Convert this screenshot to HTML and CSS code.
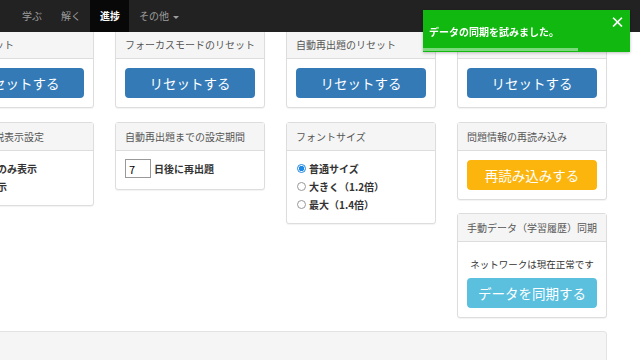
FILE: index.html
```html
<!DOCTYPE html>
<html lang="ja">
<head>
    <meta charset="UTF-8">
    <meta name="viewport" content="width=device-width, initial-scale=1.0">
    <title>進捗 - 設定</title>
    <link rel="stylesheet" href="styles.css">
</head>
<body>
    <!-- Navbar -->
    <nav class="navbar">
        <a class="nav-item" href="#">学ぶ</a>
        <a class="nav-item" href="#">解く</a>
        <a class="nav-item active" href="#">進捗</a>
        <a class="nav-item" href="#">その他 <span class="caret"></span></a>
    </nav>

    <!-- Toast -->
    <div class="toast">
        <span class="toast-close">&times;</span>
        <p class="toast-text">データの同期を試みました。</p>
        <div class="toast-progress" style="width: 75%;"></div>
    </div>

    <main class="settings">
        <!-- Row 1: resets -->
        <div class="settings-row">
            <div class="panel">
                <div class="panel-heading">履歴リセット</div>
                <div class="panel-body">
                    <button class="btn btn-primary">リセットする</button>
                </div>
            </div>
            <div class="panel">
                <div class="panel-heading">フォーカスモードのリセット</div>
                <div class="panel-body">
                    <button class="btn btn-primary">リセットする</button>
                </div>
            </div>
            <div class="panel">
                <div class="panel-heading">自動再出題のリセット</div>
                <div class="panel-body">
                    <button class="btn btn-primary">リセットする</button>
                </div>
            </div>
            <div class="panel">
                <div class="panel-heading">苦手問題のリセット</div>
                <div class="panel-body">
                    <button class="btn btn-primary">リセットする</button>
                </div>
            </div>
        </div>

        <!-- Row 2: options -->
        <div class="settings-row row-two">
            <div class="panel">
                <div class="panel-heading">問題の解説表示設定</div>
                <div class="panel-body list-body">
                    <label class="option"><input type="radio" name="kaisetsu" checked> 解答後のみ表示</label>
                    <label class="option"><input type="radio" name="kaisetsu"> 常に表示</label>
                </div>
            </div>
            <div class="panel">
                <div class="panel-heading">自動再出題までの設定期間</div>
                <div class="panel-body days-body">
                    <input class="days-input" type="text" value="7">
                    <span class="days-label">日後に再出題</span>
                </div>
            </div>
            <div class="panel">
                <div class="panel-heading">フォントサイズ</div>
                <div class="panel-body list-body">
                    <label class="option"><input type="radio" name="fontsize" checked> 普通サイズ</label>
                    <label class="option"><input type="radio" name="fontsize"> 大きく（1.2倍）</label>
                    <label class="option"><input type="radio" name="fontsize"> 最大（1.4倍）</label>
                </div>
            </div>
            <div class="stack">
                <div class="panel">
                    <div class="panel-heading">問題情報の再読み込み</div>
                    <div class="panel-body">
                        <button class="btn btn-warning">再読み込みする</button>
                    </div>
                </div>
                <div class="panel">
                    <div class="panel-heading">手動データ（学習履歴）同期</div>
                    <div class="panel-body sync-body">
                        <p class="network-status">ネットワークは現在正常です</p>
                        <button class="btn btn-info">データを同期する</button>
                    </div>
                </div>
            </div>
        </div>

        <div class="well"></div>
    </main>
</body>
</html>
```

FILE: styles.css
```css
/* Global */
body {
    margin: 0;
    padding: 0;
    background-color: #fff;
    font-family: "Noto Sans CJK JP", "Noto Sans", sans-serif;
    font-size: 10px;
    color: #333;
    overflow: hidden;
}

/* Navbar */
.navbar {
    position: fixed;
    top: 0;
    left: 0;
    right: 0;
    height: 32px;
    background-color: #222;
    display: flex;
    padding-left: 12px;
    z-index: 10;
}

.nav-item {
    display: block;
    padding: 0 9px 0 10px;
    line-height: 32px;
    font-size: 10px;
    color: #9d9d9d;
    text-decoration: none;
}

.nav-item.active {
    background-color: #080808;
    color: #fff;
    font-weight: bold;
}

.caret {
    display: inline-block;
    width: 0;
    height: 0;
    margin-left: 2px;
    vertical-align: middle;
    border-top: 3px solid #9d9d9d;
    border-left: 3px solid transparent;
    border-right: 3px solid transparent;
}

/* Toast */
.toast {
    position: fixed;
    top: 10px;
    left: 423px;
    width: 207px;
    height: 42px;
    background-color: #10b80f;
    box-shadow: 0 1px 3px rgba(0, 0, 0, 0.25);
    z-index: 20;
}

.toast-text {
    margin: 0;
    padding: 15px 0 0 6px;
    font-size: 10px;
    font-weight: bold;
    color: #fff;
    line-height: 14px;
}

.toast-close {
    position: absolute;
    top: 4px;
    right: 5px;
    font-size: 15px;
    font-weight: bold;
    color: #fff;
    line-height: 16px;
}

.toast-progress {
    position: absolute;
    left: 0;
    bottom: 1px;
    height: 3px;
    background-color: rgba(255, 255, 255, 0.45);
}

/* Layout */
.settings {
    padding-top: 30px;
    margin-left: -56px;
    width: 663px;
}

.settings-row {
    display: grid;
    grid-template-columns: repeat(4, 150px);
    column-gap: 21px;
    align-items: start;
}

.row-two {
    margin-top: 14px;
}

.stack {
    display: flex;
    flex-direction: column;
    gap: 13px;
}

/* Panels */
.panel {
    background-color: #fff;
    border: 1px solid #ddd;
    border-radius: 3px;
    box-shadow: 0 1px 1px rgba(0, 0, 0, 0.05);
}

.panel-heading {
    height: 27px;
    line-height: 27px;
    padding: 0 9px;
    background-color: #f5f5f5;
    border-bottom: 1px solid #ddd;
    font-size: 10px;
    color: #555;
    white-space: nowrap;
}

.panel-body {
    padding: 9px;
}

/* Buttons */
.btn {
    display: block;
    width: 100%;
    height: 30px;
    border: none;
    border-radius: 4px;
    font-family: inherit;
    font-size: 13.5px;
    color: #fff;
    cursor: pointer;
}

.btn-primary {
    background-color: #337ab7;
}

.btn-warning {
    background-color: #fbb50d;
}

.btn-info {
    background-color: #5bc0de;
}

/* Radio lists */
.list-body {
    padding: 8px 9px 10px;
}

.option {
    display: flex;
    align-items: center;
    height: 18px;
    font-weight: bold;
    white-space: nowrap;
}

.option input {
    appearance: none;
    width: 9px;
    height: 9px;
    margin: 0 3px 0 1px;
    border: 1px solid #999;
    border-radius: 50%;
    background-color: #fff;
}

.option input:checked {
    border-color: #1e88e5;
    background: radial-gradient(circle, #1e88e5 0 2.5px, #fff 3px);
}

/* Days input */
.days-body {
    display: flex;
    align-items: center;
    padding: 8px 9px 11px;
}

.days-input {
    width: 26px;
    height: 19px;
    box-sizing: border-box;
    padding: 0 3px;
    border: 1px solid #999;
    font-family: inherit;
    font-size: 11px;
    color: #000;
}

.days-label {
    margin-left: 3px;
    font-weight: bold;
}

/* Sync */
.sync-body {
    padding: 13px 9px 9px;
    text-align: center;
}

.network-status {
    margin: 0 0 5px;
    line-height: 18px;
    font-size: 9.5px;
}

/* Bottom well */
.well {
    margin-top: 13px;
    height: 60px;
    background-color: #f5f5f5;
    border: 1px solid #e3e3e3;
    border-radius: 3px;
}
```
